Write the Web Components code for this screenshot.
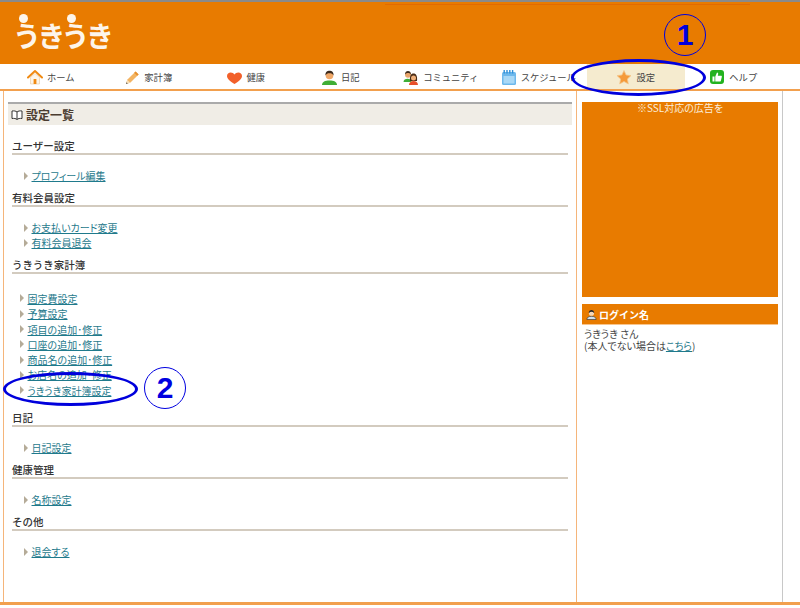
<!DOCTYPE html>
<html lang="ja">
<head>
<meta charset="utf-8">
<title>設定一覧</title>
<style>
html, body { margin: 0; height: 100%; background: #fff; }
body { position: relative; width: 800px; height: 608px; overflow: hidden; font-family: "Liberation Sans", "Noto Sans CJK JP", sans-serif; font-size: 10px; color: #333; }
</style>
</head>
<body>
<site-header></site-header>
<site-nav>
	<nav-item icon="home">ホーム</nav-item>
	<nav-item icon="pencil">家計簿</nav-item>
	<nav-item icon="heart">健康</nav-item>
	<nav-item icon="person">日記</nav-item>
	<nav-item icon="people">コミュニティ</nav-item>
	<nav-item icon="calendar">スケジュール</nav-item>
	<nav-item icon="star" active>設定</nav-item>
	<nav-item icon="thumb">ヘルプ</nav-item>
</site-nav>
<page-body>
	<settings-panel slot="main" heading="設定一覧">
		<settings-section heading="ユーザー設定">
			<setting-link>プロフィール編集</setting-link>
		</settings-section>
		<settings-section heading="有料会員設定">
			<setting-link>お支払いカード変更</setting-link>
			<setting-link>有料会員退会</setting-link>
		</settings-section>
		<settings-section heading="うきうき家計簿" wide>
			<setting-link>固定費設定</setting-link>
			<setting-link>予算設定</setting-link>
			<setting-link>項目の追加･修正</setting-link>
			<setting-link>口座の追加･修正</setting-link>
			<setting-link>商品名の追加･修正</setting-link>
			<setting-link>お店名の追加･修正</setting-link>
			<setting-link>うきうき家計簿設定</setting-link>
		</settings-section>
		<settings-section heading="日記">
			<setting-link>日記設定</setting-link>
		</settings-section>
		<settings-section heading="健康管理">
			<setting-link>名称設定</setting-link>
		</settings-section>
		<settings-section heading="その他">
			<setting-link>退会する</setting-link>
		</settings-section>
	</settings-panel>
	<side-panel slot="side"></side-panel>
</page-body>
<site-footer></site-footer>
<mark-ellipse style="left:571px;top:59px;width:135px;height:37px"></mark-ellipse>
<mark-ellipse style="left:3px;top:372px;width:135px;height:34px"></mark-ellipse>
<mark-number style="left:664px;top:14px">1</mark-number>
<mark-number style="left:144px;top:367px">2</mark-number>

<script>
const ICONS = {
	home: `<path d="M1 8.500 8 2l7 6.500" fill="none" stroke="#f08a12" stroke-width="2" stroke-linecap="round" stroke-linejoin="round"/><path d="M3.500 8.500 8 4.500l4.500 4V15h-9z" fill="#fdf6ea" stroke="#e8c9a0" stroke-width=".6"/><rect x="6.600" y="10" width="2.800" height="5" fill="#f08a12"/>`,
	pencil: `<path d="M2 15l1.200-4.200L11.600 2.400l3 3-8.400 8.400z" fill="#f3b463"/><path d="M11.600 2.400l3 3-1.400 1.400-3-3z" fill="#e8912e"/><path d="M2 15l1.200-4.200 3 3z" fill="#f7dfb8"/><path d="M2 15l.5-1.800 1.300 1.300z" fill="#555"/>`,
	heart: `<path d="M8.500 15C4 12 1 10 1 7 1 4.800 2.700 3.600 4.700 3.600c1.700 0 3 .7 3.800 2 .8-1.300 2.100-2 3.800-2C14.300 3.600 16 4.800 16 7c0 3-3 5-7.500 8z" fill="#f2602a"/>`,
	person: `<path d="M1 16c0-3.200 3-4.600 7.500-4.600S16 12.800 16 16z" fill="#3fae35"/><circle cx="8.500" cy="6.500" r="3.800" fill="#f0a868"/><path d="M4.500 6.500c-.4-3.400 1.800-4.800 4-4.800s4.400 1.400 4 4.800c-.8-1.600-2-2.200-4-2.200s-3.200.6-4 2.200z" fill="#3c2a1c"/>`,
	people: `<path d="M.5 13c0-2.200 2-3.200 4-3.200s4 1 4 3.200z" fill="#3fae35"/><circle cx="5" cy="5.800" r="3" fill="#e9a56b"/><path d="M2 5.500C2 3 3.500 2 5 2s3 1 3 3.500C7 4.300 6 4 5 4s-2 .3-3 1.500z" fill="#3c2a1c"/><path d="M6 16c0-2.800 2.200-4 4.500-4s4.500 1.200 4.500 4z" fill="#e8502a"/><path d="M7 12c-.5-5 .8-7.500 3.500-7.500S14.500 7 14 12z" fill="#4a2c16"/><circle cx="10.500" cy="9" r="2.500" fill="#f0b07a"/>`,
	calendar: `<rect x="1" y="3" width="14" height="13" rx="1.500" fill="#6db8ec"/><rect x="2.500" y="7" width="11" height="7.500" fill="#a9d8f6"/><g fill="#2f8fd8"><rect x="2.500" y="1" width="1.400" height="3.500"/><rect x="5.300" y="1" width="1.400" height="3.500"/><rect x="8.100" y="1" width="1.400" height="3.500"/><rect x="10.900" y="1" width="1.400" height="3.500"/></g>`,
	star: `<path d="M8 1.500l2.100 4.500 4.900.6-3.600 3.400.9 4.900L8 12.500l-4.300 2.400.9-4.900L1 6.600 5.900 6z" fill="#f59a3a" stroke="#f3c88e" stroke-width=".8" stroke-linejoin="round"/>`,
	thumb: `<rect x="1" y="1" width="14" height="14" rx="3" fill="#22b21e"/><path d="M3.500 7.500h2V12.500h-2zM6.300 7.500L8 3.500c1 0 1.400.8 1.100 2l-.3 1.200H12c.7 0 1 .6.800 1.200l-1 4c-.1.400-.5.600-.9.600H6.300z" fill="#fff"/>`,
};

class SiteHeader extends HTMLElement {
	connectedCallback() {
		this.attachShadow({ mode: "open" }).innerHTML = `
		<style>
			:host { display: block; height: 62px; border-top: 2px solid #8a8a8a; background: linear-gradient(#e26a00, #e26a00) 385px 2px / 365px 1px no-repeat #e87b00; }
			.logo { position: relative; width: 104px; padding: 13px 0 0 13px; color: #fdf5ea; font: 700 28px/40px "Noto Sans CJK JP", sans-serif; letter-spacing: -3.5px; white-space: nowrap; }
			.dot { position: absolute; top: 12px; width: 9px; height: 9px; border-radius: 50%; background: #fdf5ea; }
		</style>
		<div class="logo">うきうき<span class="dot" style="left:19px"></span><span class="dot" style="left:67px"></span></div>`;
	}
}

class SiteNav extends HTMLElement {
	connectedCallback() {
		this.attachShadow({ mode: "open" }).innerHTML = `
		<style>
			:host { display: grid; grid-template-columns: repeat(8, 97.5px); height: 25px; padding-left: 2px; border-bottom: 2px solid #f2a04e; }
		</style>
		<slot></slot>`;
	}
}

class NavItem extends HTMLElement {
	connectedCallback() {
		const icon = this.getAttribute("icon");
		this.attachShadow({ mode: "open" }).innerHTML = `
		<style>
			:host { display: flex; align-items: center; justify-content: center; gap: 4px; font: 9.3px "Noto Sans CJK JP", sans-serif; color: #444; white-space: nowrap; }
			:host([active]) { background: #f5ebcf; }
			:host([icon="person"]) { padding-right: 6px; }
			svg { flex: none; width: 16px; height: 16px; }
		</style>
		<svg viewBox="0 0 16 16">${ICONS[icon]}</svg><slot></slot>`;
	}
}

class PageBody extends HTMLElement {
	connectedCallback() {
		this.attachShadow({ mode: "open" }).innerHTML = `
		<style>
			:host { display: grid; grid-template-columns: 572px 206px; height: 511px; margin-left: 3px; width: 780px; box-sizing: border-box; border-left: 1px solid #f5b57a; border-right: 1px solid #c8c8c8; }
			.main { padding: 11px 4px 0 4px; }
			.side { border-left: 1px solid #f5b57a; padding: 11px 4px 0 5px; }
		</style>
		<div class="main"><slot name="main"></slot></div>
		<div class="side"><slot name="side"></slot></div>`;
	}
}

class SettingsPanel extends HTMLElement {
	connectedCallback() {
		this.attachShadow({ mode: "open" }).innerHTML = `
		<style>
			:host { display: block; }
			h2 { display: flex; align-items: center; gap: 3px; height: 21px; margin: 0 0 13px; padding-left: 3px; border-top: 2px solid #aaa; background: #f0ede6; font: 700 12px "Noto Sans CJK JP", sans-serif; color: #4a3c30; }
			svg { width: 12px; height: 12px; }
			.list { display: flex; flex-direction: column; padding: 0 4px; }
		</style>
		<h2><svg viewBox="0 0 12 12"><path d="M6 3C5 2 3 1.700 1 2v7.500c2-.3 4 0 5 1 1-1 3-1.300 5-1V2C9 1.700 7 2 6 3zM6 3v7.500" fill="#fff" stroke="#333" stroke-width="1"/></svg>${this.getAttribute("heading")}</h2>
		<div class="list"><slot></slot></div>`;
	}
}

class SettingsSection extends HTMLElement {
	connectedCallback() {
		this.attachShadow({ mode: "open" }).innerHTML = `
		<style>
			:host { display: block; margin-bottom: 6.7px; }
			h3 { height: 15px; margin: 0; border-bottom: 2px solid #d3cbbf; font: 500 10.5px/15px "Noto Sans CJK JP", sans-serif; color: #333; }
			.links { display: flex; flex-direction: column; padding: 13px 0 0 12px; }
			:host([wide]) { margin-bottom: 12.1px; }
			:host([wide]) .links { padding: 16.5px 0 0 8px; }
		</style>
		<h3>${this.getAttribute("heading")}</h3>
		<div class="links"><slot></slot></div>`;
	}
}

class SettingLink extends HTMLElement {
	connectedCallback() {
		this.attachShadow({ mode: "open" }).innerHTML = `
		<style>
			:host { display: flex; align-items: center; gap: 3.5px; height: 15.3px; font: 10px "Noto Sans CJK JP", sans-serif; font-feature-settings: "palt"; }
			i { width: 0; height: 0; border-left: 4px solid #b5ab98; border-top: 4px solid transparent; border-bottom: 4px solid transparent; }
			a { color: #1f7a8c; text-decoration: underline; }
		</style>
		<i></i><a><slot></slot></a>`;
	}
}

class SidePanel extends HTMLElement {
	connectedCallback() {
		this.attachShadow({ mode: "open" }).innerHTML = `
		<style>
			:host { display: block; font: 10px/12px "Noto Sans CJK JP", sans-serif; font-feature-settings: "palt"; color: #444; }
			.ad { height: 195px; margin-bottom: 7px; background: #e87b00; color: #fbeedd; text-align: center; }
			h3 { display: flex; align-items: center; gap: 2px; height: 20px; margin: 0 0 3px; padding-left: 4px; background: #e87b00; border-bottom: 1px solid #f8c48c; font: 700 10px "Noto Sans CJK JP", sans-serif; color: #fff; }
			svg { width: 11px; height: 11px; }
			p { margin: 0; padding-left: 2px; }
			a { color: #1f7a8c; text-decoration: underline; }
		</style>
		<div class="ad">※SSL対応の広告を</div>
		<h3><svg viewBox="0 0 12 12"><path d="M1 11.500c0-2.500 2-3.500 5-3.500s5 1 5 3.500z" fill="#cfe0ee" stroke="#333" stroke-width=".7"/><circle cx="6" cy="4.500" r="2.800" fill="#f6d8b8"/><path d="M3 4.500C3 1.800 4.500 1 6 1s3 .8 3 3.500C8 3.500 7 3 6 3s-2 .5-3 1.500z" fill="#222"/></svg>ログイン名</h3>
		<p>うきうき さん<br>(本人でない場合は<a>こちら</a>)</p>`;
	}
}

class SiteFooter extends HTMLElement {
	connectedCallback() {
		this.attachShadow({ mode: "open" }).innerHTML = `
		<style>
			:host { display: block; height: 3px; background: #f2a04e; }
		</style>`;
	}
}

class MarkEllipse extends HTMLElement {
	connectedCallback() {
		this.attachShadow({ mode: "open" }).innerHTML = `
		<style>
			:host { position: absolute; box-sizing: border-box; border: 3.5px solid #0000dc; border-radius: 50%; }
		</style>`;
	}
}

class MarkNumber extends HTMLElement {
	connectedCallback() {
		this.attachShadow({ mode: "open" }).innerHTML = `
		<style>
			:host { position: absolute; box-sizing: border-box; display: flex; align-items: center; justify-content: center; width: 42px; height: 42px; border: 1.5px solid #0000e0; border-radius: 50%; color: #0000e0; font: 700 30px "Liberation Sans", sans-serif; }
		</style>
		<slot></slot>`;
	}
}

customElements.define("site-header", SiteHeader);
customElements.define("site-nav", SiteNav);
customElements.define("nav-item", NavItem);
customElements.define("page-body", PageBody);
customElements.define("settings-panel", SettingsPanel);
customElements.define("settings-section", SettingsSection);
customElements.define("setting-link", SettingLink);
customElements.define("side-panel", SidePanel);
customElements.define("site-footer", SiteFooter);
customElements.define("mark-ellipse", MarkEllipse);
customElements.define("mark-number", MarkNumber);
</script>
</body>
</html>
